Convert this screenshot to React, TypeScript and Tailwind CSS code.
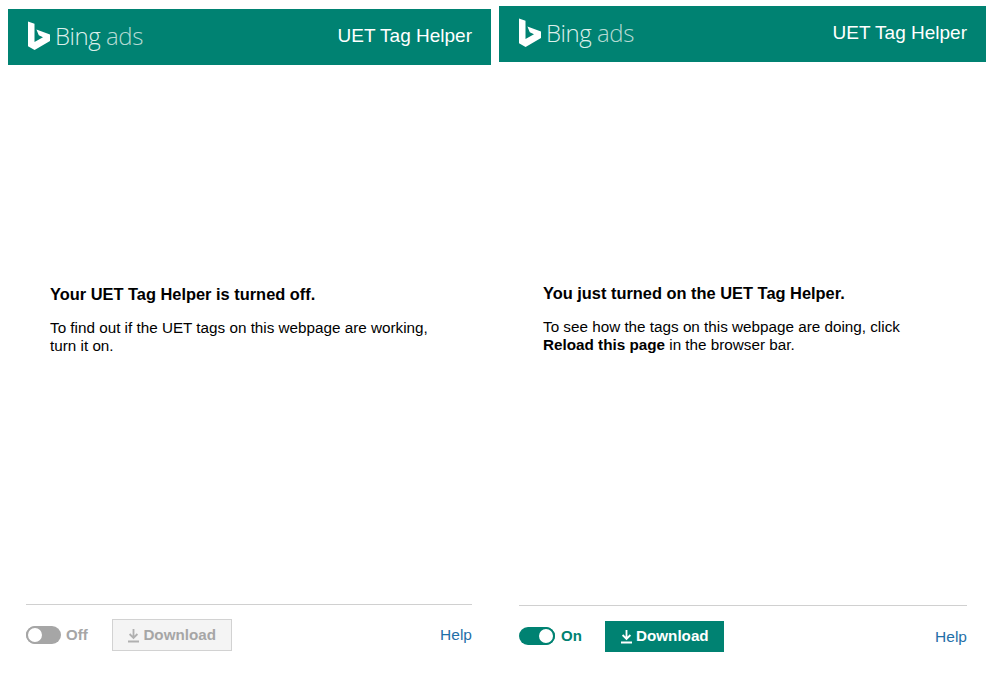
const sans = "font-['Liberation_Sans',Arial,sans-serif]"

const BingMark = () => (
  <svg width="24" height="30" viewBox="0 0 24 30" className="shrink-0">
    <path d="M1 0.5 L7.5 2.8 V21 L16 16.2 L11.8 14.2 L9.4 8.6 L23 13.4 V20 L7.6 29 L1 25.2 Z" fill="#ffffff" />
  </svg>
)

const DownloadIcon = ({ color }: { color: string }) => (
  <svg width="13" height="15" viewBox="0 0 13 15" className="shrink-0">
    <path d="M6.5 1 V9.5 M2.6 6 L6.5 10 L10.4 6 M1 13.5 H12" fill="none" stroke={color} strokeWidth="1.8" />
  </svg>
)

const Header = () => (
  <div className="flex h-[56px] items-center justify-between bg-[#008272] px-[19px]">
    <div className="flex items-center gap-[4px] pb-[3px]">
      <BingMark />
      <span className="font-['Open_Sans',sans-serif] text-[24px] font-light tracking-[-0.45px] text-[#dcefeb]">
        Bing <span className="text-[#b5dad3]">ads</span>
      </span>
    </div>
    <span className={`${sans} pb-[2px] text-[19px] text-white`}>UET Tag Helper</span>
  </div>
)

const Panel = ({
  className,
  title,
  children,
  footer,
  contentClass,
}: {
  className: string
  title: string
  children: React.ReactNode
  footer: React.ReactNode
  contentClass: string
}) => (
  <div className={`flex flex-col ${className}`}>
    <Header />
    <div className={`${contentClass} flex-1 text-black ${sans}`}>
      <h2 className="text-[16.4px] leading-[20px] font-bold">{title}</h2>
      <p className="mt-[15px] w-[385px] text-[15.25px] leading-[18px]">{children}</p>
    </div>
    {footer}
  </div>
)

export default function App() {
  return (
    <div className={`flex h-[674px] w-[1006px] items-start bg-white ${sans}`}>
      <Panel
        className="mt-[9px] ml-[8px] h-[645px] w-[483px]"
        contentClass="pt-[219px] pl-[42px]"
        title="Your UET Tag Helper is turned off."
        footer={
          <div className="mr-[19px] ml-[18px] flex h-[50px] items-start border-t border-[#d0d0d0] pt-[14px]">
            <div className="mt-[7px] flex h-[18px] w-[35px] items-center rounded-full bg-[#a6a6a6]">
              <div className="h-[18px] w-[18px] rounded-full border-2 border-[#a6a6a6] bg-white" />
            </div>
            <span className="mt-[7px] ml-[5px] text-[15px] leading-[18px] font-bold text-[#a6a6a6]">Off</span>
            <button className="ml-[24px] flex h-[32px] w-[120px] items-center justify-center gap-[3px] border border-[#d2d2d2] bg-[#f4f4f4] text-[15.2px] font-bold text-[#a6a6a6]">
              <DownloadIcon color="#b0b0b0" />
              Download
            </button>
            <a className="mt-[7px] ml-auto text-[15.5px] leading-[18px] text-[#1f6fa8]">Help</a>
          </div>
        }
      >
        To find out if the UET tags on this webpage are working, turn it on.
      </Panel>
      <Panel
        className="mt-[6px] ml-[8px] h-[649px] w-[487px]"
        contentClass="pt-[221px] pl-[44px]"
        title="You just turned on the UET Tag Helper."
        footer={
          <div className="mr-[19px] ml-[20px] flex h-[50px] items-start border-t border-[#d0d0d0] pt-[15px]">
            <div className="mt-[6px] flex h-[18px] w-[36px] items-center justify-end rounded-full bg-[#008272]">
              <div className="h-[18px] w-[18px] rounded-full border-2 border-[#008272] bg-white" />
            </div>
            <span className="mt-[6px] ml-[6px] text-[15px] leading-[18px] font-bold text-[#008272]">On</span>
            <button className="ml-[23px] flex h-[31px] w-[119px] items-center justify-center gap-[3px] bg-[#008272] text-[15.2px] font-bold text-white">
              <DownloadIcon color="#ffffff" />
              Download
            </button>
            <a className="mt-[7px] ml-auto text-[15.5px] leading-[18px] text-[#1f6fa8]">Help</a>
          </div>
        }
      >
        To see how the tags on this webpage are doing, click <b>Reload this page</b> in the browser bar.
      </Panel>
    </div>
  )
}
